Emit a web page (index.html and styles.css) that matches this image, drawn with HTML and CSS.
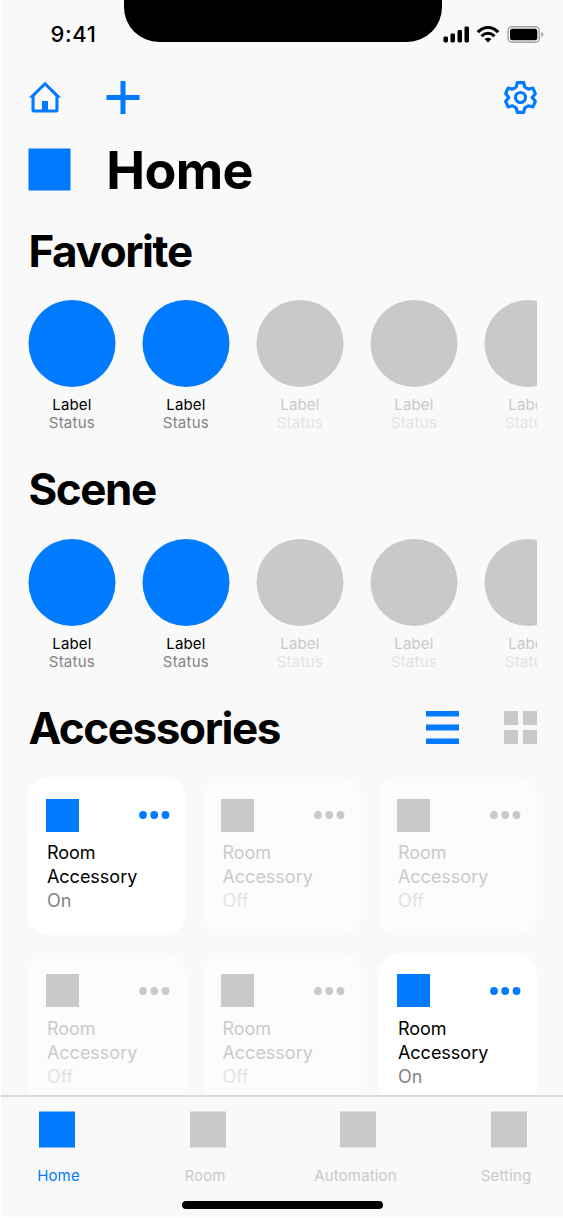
FILE: index.html
```html
<!DOCTYPE html>
<html lang="en">
<head>
<meta charset="utf-8">
<title>Home</title>
<link rel="stylesheet" href="styles.css">
</head>
<body>
<svg class="defs" width="0" height="0">
  <symbol id="dots" viewBox="0 0 31 8"><circle cx="4" cy="4" r="3.9"/><circle cx="15.2" cy="4" r="3.9"/><circle cx="26.5" cy="4" r="3.9"/></symbol>
</svg>
<div class="phone">
  <header class="status-bar">
    <span class="time">9:41</span>
    <div class="notch"></div>
    <svg class="indicators" width="102" height="18" viewBox="0 0 102 18">
      <rect x="0.5" y="10.5" width="4.5" height="6" rx="1.4"/><rect x="7.5" y="7.5" width="4.5" height="9" rx="1.4"/><rect x="14.5" y="4" width="4.5" height="12.5" rx="1.4"/><rect x="21.5" y="0.5" width="4.5" height="16" rx="1.4"/>
      <g fill="none" stroke="#000" stroke-width="3"><path d="M34.7 6.2Q45 -3.2 55.3 6.2"/><path d="M38.5 10.1Q45 4.4 51.5 10.1"/></g>
      <path d="M41.6 13.1Q45 10.2 48.4 13.1L45 16.6Z"/>
      <rect x="65" y="0.8" width="31.3" height="15.4" rx="4" fill="none" stroke="#a0a0a0" stroke-width="1.4"/>
      <rect x="67" y="2.8" width="27.3" height="11.4" rx="2.2"/>
      <path d="M98.4 5.8v5.4q2-.8 2-2.7t-2-2.7" fill="#a0a0a0"/>
    </svg>
  </header>
  <nav class="toolbar">
    <svg width="33" height="33" viewBox="0 0 33 33"><path d="M.8 16.5 17 .8 33.2 16.5H30.5V29.4Q30.5 31.5 28.4 31.5H5.6Q3.5 31.5 3.5 29.4V16.5ZM6.6 15.2V28.5H14V20H20V28.5H27.4V15.2L17 4.8Z" fill-rule="evenodd"/></svg>
    <svg class="plus" width="34" height="33" viewBox="0 0 34 33"><path d="M14.5 0h5v14h14v5h-14v14h-5V19H.5v-5h14z"/></svg>
    <svg class="gear" width="33" height="33" viewBox="0 0 33 33"><g fill="none" stroke="#007aff" stroke-width="3.2"><path stroke-linejoin="round" d="M13.3 1.6H19.7L20.8 6.2 24.4 8.2 28.9 7 31.3 12.7 28.2 16.5 31.3 20.3 28.9 26 24.4 24.8 20.8 26.8 19.7 31.4H13.3L12.2 26.8 8.6 24.8 4.1 26 1.7 20.3 4.8 16.5 1.7 12.7 4.1 7 8.6 8.2 12.2 6.2Z"/><circle cx="16.5" cy="16.5" r="5"/></g></svg>
  </nav>
  <main>
    <div class="title"><span class="title-icon"></span><h1>Home</h1></div>
    <section class="shelf">
      <h2>Favorite</h2>
      <div class="row">
        <div class="item on"><i></i><b>Label</b><span>Status</span></div>
        <div class="item on"><i></i><b>Label</b><span>Status</span></div>
        <div class="item"><i></i><b>Label</b><span>Status</span></div>
        <div class="item"><i></i><b>Label</b><span>Status</span></div>
        <div class="item"><i></i><b>Label</b><span>Status</span></div>
      </div>
    </section>
    <section class="shelf">
      <h2>Scene</h2>
      <div class="row">
        <div class="item on"><i></i><b>Label</b><span>Status</span></div>
        <div class="item on"><i></i><b>Label</b><span>Status</span></div>
        <div class="item"><i></i><b>Label</b><span>Status</span></div>
        <div class="item"><i></i><b>Label</b><span>Status</span></div>
        <div class="item"><i></i><b>Label</b><span>Status</span></div>
      </div>
    </section>
    <section>
      <div class="section-head">
        <h2>Accessories</h2>
        <svg class="list" width="33" height="33" viewBox="0 0 33 33"><path d="M0 0h33v5.5H0zM0 13.5h33v6H0zM0 27.5h33V33H0z"/></svg>
        <svg class="tiles" width="33" height="33" viewBox="0 0 33 33"><path d="M0 0h14v14H0zM19 0h14v14H19zM0 19h14v14H0zM19 19h14v14H19z"/></svg>
      </div>
      <div class="cards">
        <article class="card on"><div class="card-top"><i></i><svg width="31" height="8"><use href="#dots"/></svg></div><p>Room</p><p>Accessory</p><p class="state">On</p></article>
        <article class="card"><div class="card-top"><i></i><svg width="31" height="8"><use href="#dots"/></svg></div><p>Room</p><p>Accessory</p><p class="state">Off</p></article>
        <article class="card"><div class="card-top"><i></i><svg width="31" height="8"><use href="#dots"/></svg></div><p>Room</p><p>Accessory</p><p class="state">Off</p></article>
        <article class="card"><div class="card-top"><i></i><svg width="31" height="8"><use href="#dots"/></svg></div><p>Room</p><p>Accessory</p><p class="state">Off</p></article>
        <article class="card"><div class="card-top"><i></i><svg width="31" height="8"><use href="#dots"/></svg></div><p>Room</p><p>Accessory</p><p class="state">Off</p></article>
        <article class="card on"><div class="card-top"><i></i><svg width="31" height="8"><use href="#dots"/></svg></div><p>Room</p><p>Accessory</p><p class="state">On</p></article>
      </div>
    </section>
  </main>
  <footer>
    <div class="tabs">
      <a class="tab first on"><i></i><span>Home</span></a>
      <a class="tab"><i></i><span>Room</span></a>
      <a class="tab"><i></i><span>Automation</span></a>
      <a class="tab"><i></i><span>Setting</span></a>
    </div>
    <div class="home-indicator"></div>
  </footer>
</div>
</body>
</html>
```
FILE: styles.css
```css
* { box-sizing: border-box; }
body { margin: 0; background: #fff; font-family: Inter, "Liberation Sans", sans-serif; color: #000; }
h1, h2, p { margin: 0; }
svg { display: block; flex: none; }
.defs { position: absolute; }
.phone { display: flex; flex-direction: column; width: 562px; height: 1216.5px; margin-left: 1px; background: #f9f9f9; overflow: hidden; }

.status-bar { display: flex; height: 81px; }
.time { width: 122.5px; padding: 20px 0 0 49.5px; font-size: 22px; line-height: 28px; font-weight: 500; letter-spacing: .6px; }
.notch { width: 318.5px; height: 42px; background: #000; border-radius: 0 0 35px 35px; }
.indicators { margin: 26px 0 0 .5px; }

.toolbar { display: flex; height: 33px; padding: 0 26px 0 27px; fill: #007aff; }
.plus { margin-left: 45px; }
.gear { margin-left: auto; }

main { flex: none; height: 981px; padding: 24px 26px 0 27.4px; overflow: hidden; }
.title { display: flex; height: 84px; padding-top: 10.5px; }
.title-icon { width: 42px; height: 42px; background: #007aff; transform: translate(.5px, -.5px); }
h1 { margin-left: 35.8px; margin-top: -9px; font-size: 52px; line-height: 62px; font-weight: 700; letter-spacing: -.6px; }
h2 { height: 54px; padding-top: 4.5px; font-size: 44px; line-height: 48.5px; font-weight: 700; letter-spacing: -1.4px; }
.shelf { height: 238.5px; }
.row { display: flex; gap: 27px; margin-top: 24px; overflow: hidden; }
.item { flex: none; width: 87px; display: flex; flex-direction: column; align-items: center; color: #c9c9c9; font-size: 15px; line-height: 18px; letter-spacing: .25px; }
.item i { width: 87px; height: 87px; margin-bottom: 9px; border-radius: 50%; background: #c9c9c9; transform: translateX(.5px); }
.item b { font-weight: 400; letter-spacing: .15px; }
.item span { color: #e3e3e3; }
.item.on { color: #000; }
.item.on i { background: #007aff; }
.item.on span { color: #848484; }

.section-head { display: flex; align-items: flex-start; }
.section-head svg { margin-top: 12px; }
.list { margin-left: auto; fill: #007aff; }
.tiles { margin-left: 45px; fill: #c9c9c9; }
.cards { display: grid; grid-template-columns: repeat(3, 157.5px); gap: 18px; margin-top: 24px; }
.card { height: 157.5px; padding: 21px 16px 0 18.5px; border-radius: 21px; background: #fcfcfc; color: #cbcbcb; fill: #c9c9c9; font-size: 18px; line-height: 24px; letter-spacing: 0; }
.card-top { display: flex; align-items: center; justify-content: space-between; height: 34px; margin: 0 0 9px -1px; }
.card-top i { width: 33px; height: 33px; background: #c9c9c9; }
.state { color: #e3e3e3; }
.card.on { background: #fff; color: #000; fill: #007aff; }
.card.on i { background: #007aff; }
.card.on .state { color: #848484; }

footer { flex: 1; border-top: 2px solid #d8d8d8; }
.tabs { display: flex; margin-left: -19.25px; padding-top: 14px; height: 104px; }
.tab { flex: none; width: 150.5px; display: flex; flex-direction: column; align-items: center; color: #c9c9c9; font-size: 15px; line-height: 18px; letter-spacing: .15px; }
.tab i { width: 36px; height: 36px; margin-bottom: 19.5px; background: #c9c9c9; transform: translateY(.5px); }
.tab span { margin-left: -5px; }
.tab.first span { margin-left: 3px; }
.tab.on { color: #007aff; }
.tab.on i { background: #007aff; }
.home-indicator { width: 201px; height: 8px; margin: 0 auto; border-radius: 4px; background: #000; }
```
